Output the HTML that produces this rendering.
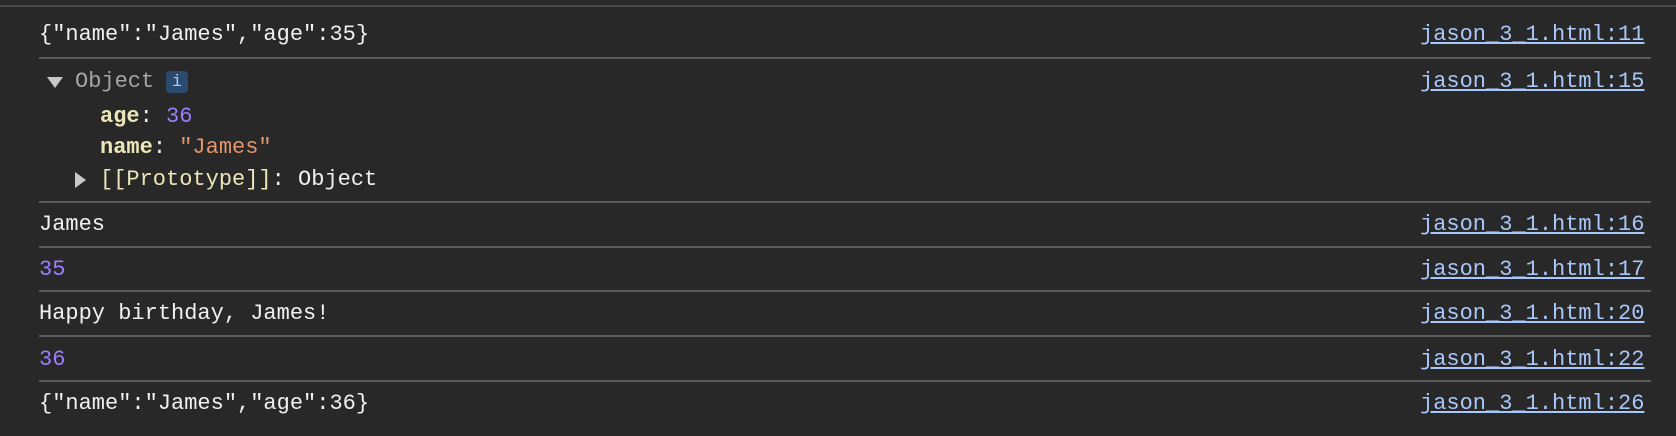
<!DOCTYPE html>
<html><head><style>
body{margin:0;width:1676px;height:436px;background:#282828;font-family:"Liberation Mono",monospace;font-size:22px;color:#f0f0f0;position:relative;overflow:hidden}
.a{position:absolute;white-space:pre;line-height:26px}
.hr{position:absolute;left:39px;width:1612px;height:2px;background:#5a5a5a}
.l{position:absolute;left:1420px;width:223px;text-align:right;color:#a8c7fa;text-decoration:underline;white-space:pre;line-height:26px}
.n{color:#9980ff}.k{color:#ede6b8;font-weight:bold}.s{color:#e3946b}
</style></head><body>
<div style="position:absolute;left:0;top:5px;width:1676px;height:2px;background:#4a4a4a"></div>
<div class="a" style="left:39px;top:22px">{"name":"James","age":35}</div><div class="l" style="top:22px">jason_3_1.html:11</div>
<div class="hr" style="top:57px"></div>
<div class="a" style="left:47px;top:69px"><svg width="16" height="12" style="position:absolute;left:0;top:8px"><path d="M0 0H16L8 11Z" fill="#c8c8c8"/></svg></div>
<div class="a" style="left:75px;top:69px;color:#a5a5a5">Object</div>
<div style="position:absolute;left:166px;top:71px;width:22px;height:22px;background:#2b4a70;border-radius:4px;color:#a8c7fa;font-size:17px;text-align:center;line-height:24px">i</div>
<div class="l" style="top:69px">jason_3_1.html:15</div>
<div class="a" style="left:100px;top:104px"><span class="k">age</span>: <span class="n">36</span></div>
<div class="a" style="left:100px;top:135px"><span class="k">name</span>: <span class="s">"James"</span></div>
<div class="a" style="left:75px;top:167px"><svg width="12" height="16" style="position:absolute;left:0;top:5px"><path d="M0 0V16L11 8Z" fill="#c8c8c8"/></svg></div>
<div class="a" style="left:100px;top:167px"><span style="color:#ede6b8">[[Prototype]]</span>: Object</div>
<div class="hr" style="top:201px"></div>
<div class="a" style="left:39px;top:212px">James</div><div class="l" style="top:212px">jason_3_1.html:16</div>
<div class="hr" style="top:246px"></div>
<div class="a n" style="left:39px;top:257px">35</div><div class="l" style="top:257px">jason_3_1.html:17</div>
<div class="hr" style="top:290px"></div>
<div class="a" style="left:39px;top:301px">Happy birthday, James!</div><div class="l" style="top:301px">jason_3_1.html:20</div>
<div class="hr" style="top:335px"></div>
<div class="a n" style="left:39px;top:347px">36</div><div class="l" style="top:347px">jason_3_1.html:22</div>
<div class="hr" style="top:380px"></div>
<div class="a" style="left:39px;top:391px">{"name":"James","age":36}</div><div class="l" style="top:391px">jason_3_1.html:26</div>
</body></html>
